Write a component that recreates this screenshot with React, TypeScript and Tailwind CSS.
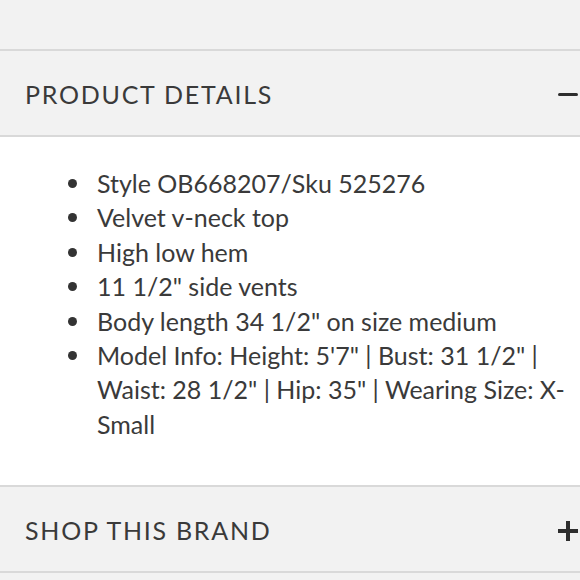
const items = [
  'Style OB668207/Sku 525276',
  'Velvet v-neck top',
  'High low hem',
  '11 1/2" side vents',
  'Body length 34 1/2" on size medium',
  'Model Info: Height: 5\'7" | Bust: 31 1/2" | Waist: 28 1/2" | Hip: 35" | Wearing Size: X-Small',
];

function Header({ title, open }: { title: string; open: boolean }) {
  return (
    <div className="flex h-[86px] items-center justify-between bg-[#f2f2f2] pl-[25px] pt-[3px] border-b-2 border-[#d9d9d9]">
      <span className="text-[25px] tracking-[0.07em] text-[#3a3a3a]">{title}</span>
      {open ? (
        <span className="mr-[2px] block h-[3px] w-[20px] rounded-full bg-[#2e2e2e]" />
      ) : (
        <span className="relative mr-[2px] block h-[20px] w-[20px]">
          <span className="absolute left-0 top-[8px] h-[4px] w-[20px] bg-[#2e2e2e]" />
          <span className="absolute left-[8px] top-0 h-[20px] w-[4px] bg-[#2e2e2e]" />
        </span>
      )}
    </div>
  );
}

export default function App() {
  return (
    <div className="h-[580px] w-[580px] overflow-hidden bg-[#f2f2f2] font-['Lato','Liberation_Sans',sans-serif]">
      <div className="h-[51px] border-b-2 border-[#d9d9d9]" />
      <Header title="PRODUCT DETAILS" open />
      <div className="bg-white pb-[44px] pl-[68px] pr-[8px] pt-[29px]">
        {items.map((t) => (
          <div key={t} className="flex text-[25px] leading-[34.4px] text-[#3a3a3a]">
            <span className="mt-[13px] mr-[20px] block h-[9px] w-[9px] shrink-0 rounded-full bg-[#333]" />
            <span>{t}</span>
          </div>
        ))}
      </div>
      <div className="border-t-2 border-[#d9d9d9]" />
      <Header title="SHOP THIS BRAND" open={false} />
    </div>
  );
}
